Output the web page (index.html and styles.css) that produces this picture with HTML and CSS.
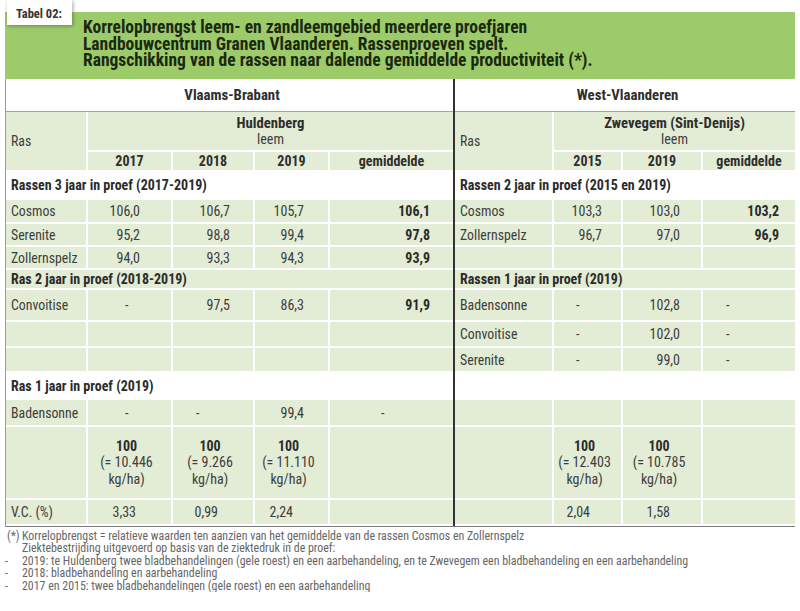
FILE: index.html
```html
<!DOCTYPE html>
<html lang="nl">
<head>
<meta charset="utf-8">
<title>Tabel 02</title>
<link rel="stylesheet" href="styles.css">
</head>
<body>
<div class="page">
  <div class="tab">Tabel 02:</div>
  <header class="title">
    Korrelopbrengst leem- en zandleemgebied meerdere proefjaren<br>
    Landbouwcentrum Granen Vlaanderen. Rassenproeven spelt.<br>
    Rangschikking van de rassen naar dalende gemiddelde productiviteit (*).
  </header>

  <div class="tables">
    <table class="t left">
      <colgroup><col class="cl1"><col class="cl2"><col class="cl3"><col class="cl4"><col class="cl5"></colgroup>
      <tr class="r-region"><td colspan="5">Vlaams-Brabant</td></tr>
      <tr class="r-loc"><td rowspan="2" class="ras">Ras</td><td colspan="4" class="loc"><b>Huldenberg</b><br>leem</td></tr>
      <tr class="r-years"><td class="yr">2017</td><td class="yr">2018</td><td class="yr">2019</td><td class="yr">gemiddelde</td></tr>
      <tr class="r-sec white"><td colspan="5" class="sec">Rassen 3 jaar in proef (2017-2019)</td></tr>
      <tr class="r-d1"><td>Cosmos</td><td class="v1">106,0</td><td class="v2">106,7</td><td class="v3">105,7</td><td class="g">106,1</td></tr>
      <tr class="r-d2"><td>Serenite</td><td class="v1">95,2</td><td class="v2">98,8</td><td class="v3">99,4</td><td class="g">97,8</td></tr>
      <tr class="r-d2"><td>Zollernspelz</td><td class="v1">94,0</td><td class="v2">93,3</td><td class="v3">94,3</td><td class="g">93,9</td></tr>
      <tr class="r-sec2"><td colspan="5" class="sec">Ras 2 jaar in proef (2018-2019)</td></tr>
      <tr class="r-d3"><td>Convoitise</td><td class="d1">-</td><td class="v2">97,5</td><td class="v3">86,3</td><td class="g">91,9</td></tr>
      <tr class="r-d4"><td></td><td></td><td></td><td></td><td></td></tr>
      <tr class="r-d5"><td></td><td></td><td></td><td></td><td></td></tr>
      <tr class="r-sec3 white"><td colspan="5" class="sec">Ras 1 jaar in proef (2019)</td></tr>
      <tr class="r-d6"><td>Badensonne</td><td class="d1">-</td><td class="d2">-</td><td class="v3">99,4</td><td class="dg">-</td></tr>
      <tr class="r-ref"><td></td><td class="ref"><b>100</b><br>(= 10.446<br>kg/ha)</td><td class="ref"><b>100</b><br>(= 9.266<br>kg/ha)</td><td class="ref"><b>100</b><br>(= 11.110<br>kg/ha)</td><td></td></tr>
      <tr class="r-vc"><td>V.C. (%)</td><td class="vc">3,33</td><td class="vc">0,99</td><td class="vc">2,24</td><td></td></tr>
    </table>

    <table class="t right">
      <colgroup><col class="cr1"><col class="cr2"><col class="cr3"><col class="cr4"></colgroup>
      <tr class="r-region"><td colspan="4">West-Vlaanderen</td></tr>
      <tr class="r-loc"><td rowspan="2" class="ras">Ras</td><td colspan="3" class="loc"><b>Zwevegem (Sint-Denijs)</b><br>leem</td></tr>
      <tr class="r-years"><td class="yr">2015</td><td class="yr">2019</td><td class="yr">gemiddelde</td></tr>
      <tr class="r-sec white"><td colspan="4" class="sec">Rassen 2 jaar in proef (2015 en 2019)</td></tr>
      <tr class="r-d1"><td>Cosmos</td><td class="w1">103,3</td><td class="w2">103,0</td><td class="g2">103,2</td></tr>
      <tr class="r-d2"><td>Zollernspelz</td><td class="w1">96,7</td><td class="w2">97,0</td><td class="g2">96,9</td></tr>
      <tr class="r-d2"><td></td><td></td><td></td><td></td></tr>
      <tr class="r-sec2"><td colspan="4" class="sec">Rassen 1 jaar in proef (2019)</td></tr>
      <tr class="r-d3"><td>Badensonne</td><td class="dw1">-</td><td class="w2">102,8</td><td class="dg2">-</td></tr>
      <tr class="r-d4"><td>Convoitise</td><td class="dw1">-</td><td class="w2">102,0</td><td class="dg2">-</td></tr>
      <tr class="r-d5"><td>Serenite</td><td class="dw1">-</td><td class="w2">99,0</td><td class="dg2">-</td></tr>
      <tr class="r-sec3 white"><td colspan="4"></td></tr>
      <tr class="r-d6"><td></td><td></td><td></td><td></td></tr>
      <tr class="r-ref"><td></td><td class="ref"><b>100</b><br>(= 12.403<br>kg/ha)</td><td class="ref"><b>100</b><br>(= 10.785<br>kg/ha)</td><td></td></tr>
      <tr class="r-vc"><td></td><td class="vcr">2,04</td><td class="vcr">1,58</td><td></td></tr>
    </table>
  </div>

  <div class="notes">
    <span class="mk star">(*)</span><span>Korrelopbrengst = relatieve waarden ten aanzien van het gemiddelde van de rassen Cosmos en Zollernspelz</span>
    <span class="mk"></span><span>Ziektebestrijding uitgevoerd op basis van de ziektedruk in de proef:</span>
    <span class="mk">-</span><span>2019: te Huldenberg twee bladbehandelingen (gele roest) en een aarbehandeling, en te Zwevegem een bladbehandeling en een aarbehandeling</span>
    <span class="mk">-</span><span>2018: bladbehandeling en aarbehandeling</span>
    <span class="mk">-</span><span>2017 en 2015: twee bladbehandelingen (gele roest) en een aarbehandeling</span>
  </div>
</div>
</body>
</html>
```
FILE: styles.css
```css
html, body {
  margin: 0;
  padding: 0;
  background: #fff;
}
body {
  font-family: "Roboto Condensed", "Liberation Sans Narrow", "DejaVu Sans Condensed", sans-serif;
  color: #3d3d3d;
}
.page {
  position: relative;
  width: 790px;
  padding: 12px 5px 0 5px;
}
.tab {
  position: absolute;
  left: 7px;
  top: 0;
  width: 65px;
  height: 25px;
  box-sizing: border-box;
  padding: 6px 0 0 9px;
  background: #fff;
  box-shadow: 1px 1px 4px rgba(0, 0, 0, 0.35);
  font-size: 12.5px;
  font-weight: bold;
  color: #333;
  z-index: 2;
}
.title {
  height: 67px;
  box-sizing: border-box;
  padding: 7px 0 0 78px;
  background: #9dcb6a;
  font-size: 17.5px;
  line-height: 16.5px;
  font-weight: bold;
  color: #1b2810;
}
.tables {
  display: flex;
  border-left: 1px solid #9a9a9a;
  border-bottom: 1px solid #7d7d7d;
}
table.t {
  border-collapse: separate;
  border-spacing: 0;
  table-layout: fixed;
  font-size: 14px;
}
table.left {
  width: 447px;
  border-right: 2px solid #333;
}
table.right {
  width: 340px;
}
.cl1 { width: 82px; }
.cl2 { width: 85px; }
.cl3 { width: 82px; }
.cl4 { width: 75px; }
.cl5 { width: 123px; }
.cr1 { width: 99px; }
.cr2 { width: 69px; }
.cr3 { width: 80px; }
.cr4 { width: 92px; }

td {
  background: #e3ecd4;
  border-right: 2px solid #fff;
  border-bottom: 2px solid #fff;
  padding: 0 0 0 5px;
  vertical-align: middle;
  white-space: nowrap;
  line-height: 16px;
}
td:last-child { border-right: none; }
td:first-child { font-size: 13.8px; }

.r-region { height: 33px; }
.r-region td {
  background: #fff;
  border-bottom: 1px solid #a0a0a0;
  text-align: center;
  font-weight: bold;
  font-size: 14.8px;
  color: #2e2e2e;
}
.r-loc { height: 40px; }
.r-years { height: 20px; }
.r-sec { height: 28px; }
.r-d1 { height: 24px; }
.r-d2 { height: 23px; }
.r-sec2 { height: 20px; }
.r-d3 { height: 32px; }
.r-d4 { height: 26px; }
.r-d5 { height: 25px; }
.r-sec3 { height: 27px; }
.r-d6 { height: 27px; }
.r-ref { height: 73px; }
.r-vc { height: 26px; }

.white td { background: #fff; border-bottom-color: #fff; }

td.loc {
  text-align: center;
  padding: 1px 0 0 0;
  line-height: 15.5px;
}
.loc b { color: #2e2e2e; font-size: 14.7px; }
td.yr {
  text-align: center;
  font-weight: bold;
  font-size: 14px;
  padding: 0;
  color: #2e2e2e;
}
td.sec {
  font-weight: bold;
  font-size: 14px;
  color: #2b2b2b;
}

.v1, .v2, .v3, .g, .w1, .w2, .g2 { text-align: right; padding-left: 0; }
.v1 { padding-right: 31px; }
.v2 { padding-right: 23px; }
.v3 { padding-right: 24px; }
.g { padding-right: 23px; font-weight: bold; color: #2b2b2b; }
.w1 { padding-right: 19px; }
.w2 { padding-right: 21px; }
.g2 { padding-right: 16px; font-weight: bold; color: #2b2b2b; }

.d1 { padding-left: 37px; }
.d2 { padding-left: 23px; }
.dg { padding-left: 51px; }
.dw1 { padding-left: 22px; }
.dg2 { padding-left: 23px; }

.ref {
  text-align: center;
  padding: 0 6px 0 0;
  line-height: 16.5px;
}
.ref b { color: #2b2b2b; }
.vc { text-align: right; padding: 0 35px 0 0; }
.vcr { text-align: right; padding: 0 31px 0 0; }

.notes {
  display: grid;
  grid-template-columns: 17px 1fr;
  padding-top: 3px;
  font-size: 11.9px;
  line-height: 12.4px;
  color: #666;
}
.mk { padding-left: 0; }
.star { padding-left: 2px; }
```
